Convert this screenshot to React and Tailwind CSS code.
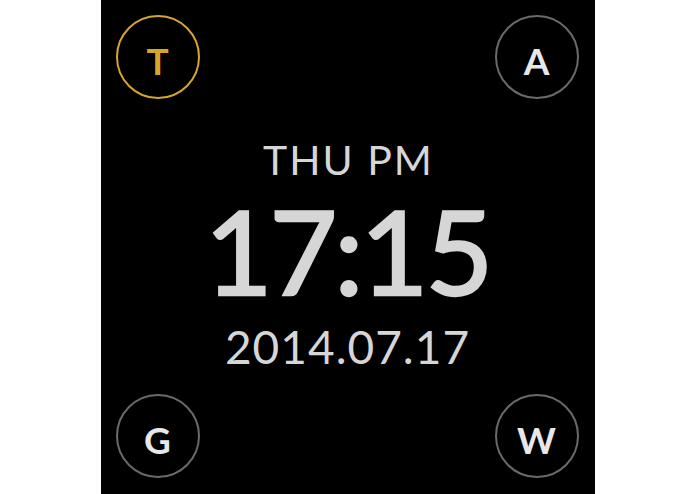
export default function App() {
  const font = { fontFamily: 'Lato, "Open Sans", sans-serif' };
  const Circle = ({ letter, gold }) => (
    <div
      className={`w-[84px] h-[84px] rounded-full border-2 flex items-center justify-center ${
        gold ? "border-[#d6a52b] text-[#d6a52b]" : "border-[#6a6a6a] text-[#e8e8e8]"
      }`}
    >
      <span className="text-[37px] font-bold leading-none pt-[7px]">{letter}</span>
    </div>
  );
  return (
    <div className="w-[695px] h-[494px] bg-white flex justify-center" style={font}>
      <div className="w-[494px] h-[494px] bg-black flex flex-col">
        <div className="flex justify-between pt-[15px] pl-[15px] pr-[16px]">
          <Circle letter="T" gold />
          <Circle letter="A" />
        </div>
        <div className="flex flex-col items-center text-[#d6d6d6] mt-[40px]">
          <div className="text-[41px] leading-none tracking-[2px] pl-[2px]">THU PM</div>
          <div className="text-[117px] leading-[90px] tracking-[-3px] mt-[25px] [-webkit-text-stroke:2.5px_#d6d6d6]">17:15</div>
          <div className="text-[46px] leading-none tracking-[1px] mt-[29px]">2014.07.17</div>
        </div>
        <div className="flex justify-between mt-auto pb-[16px] pl-[15px] pr-[16px]">
          <Circle letter="G" />
          <Circle letter="W" />
        </div>
      </div>
    </div>
  );
}
